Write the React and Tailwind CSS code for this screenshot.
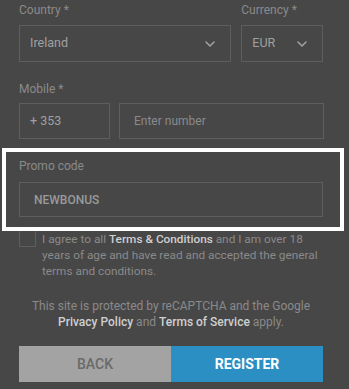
import React from "react";

function Chevron() {
  return (
    <svg width="12" height="8" viewBox="0 0 12 8" fill="none" stroke="#a0a0a0" strokeWidth="1.6" strokeLinecap="round" strokeLinejoin="round">
      <path d="M2 2l4 4 4-4" />
    </svg>
  );
}

export default function App() {
  return (
    <div
      className="relative w-[349px] h-[389px] overflow-hidden bg-[#474747] pl-[19px] pr-[26px] pt-[2px]"
      style={{ fontFamily: "Roboto, 'Liberation Sans', sans-serif" }}
    >
      {/* Country / Currency */}
      <div className="flex gap-[10px]">
        <div className="w-[213px]">
          <div className="text-[12px] leading-[16px] text-[#8a8a8a]">Country *</div>
          <div className="mt-[7px] h-[37px] border border-[#5e5e5e] flex items-center justify-between pl-[10px] pr-[14px]">
            <span className="text-[12.5px] text-[#a0a0a0]">Ireland</span>
            <Chevron />
          </div>
        </div>
        <div className="w-[82px]">
          <div className="text-[12px] leading-[16px] text-[#8a8a8a]">Currency *</div>
          <div className="mt-[7px] h-[37px] border border-[#5e5e5e] flex items-center justify-between pl-[10px] pr-[14px]">
            <span className="text-[12.5px] text-[#a0a0a0]">EUR</span>
            <Chevron />
          </div>
        </div>
      </div>

      {/* Mobile */}
      <div className="mt-[19px] text-[12px] leading-[16px] text-[#8a8a8a]">Mobile *</div>
      <div className="mt-[6px] flex gap-[9px]">
        <div className="w-[91px] h-[36px] border border-[#5e5e5e] flex items-center pl-[10px]">
          <span className="text-[12.5px] text-[#a0a0a0]">+ 353</span>
        </div>
        <div className="flex-1 mr-[-1px] h-[36px] border border-[#5e5e5e] flex items-center pl-[14px]">
          <span className="text-[12px] text-[#8a8a8a]">Enter number</span>
        </div>
      </div>

      {/* Promo */}
      <div className="mt-[19px] text-[12px] leading-[16px] text-[#8a8a8a]">Promo code</div>
      <div className="mt-[8px] h-[35px] border border-[#5e5e5e] flex items-center pl-[14px]">
        <span className="text-[12px] font-medium text-[#9a9a9a]">NEWBONUS</span>
      </div>

      {/* Agreement */}
      <div className="mt-[12px] flex gap-[6px] mr-[-6px]">
        <div className="mt-[1px] w-[17px] h-[17px] shrink-0 border border-[#5e5e5e]" />
        <p className="text-[11.8px] leading-[16px] text-[#8a8a8a] pt-[2px]">
          I agree to all <span className="font-medium text-[#cfcfcf]">Terms &amp; Conditions</span> and I am over 18
          <br />
          years of age and have read and accepted the general
          <br />
          terms and conditions.
        </p>
      </div>

      {/* reCAPTCHA */}
      <p className="mt-[19px] text-center text-[12px] leading-[16px] text-[#8a8a8a]">
        This site is protected by reCAPTCHA and the Google
        <br />
        <span className="font-medium text-[#cfcfcf]">Privacy Policy</span> and{" "}
        <span className="font-medium text-[#cfcfcf]">Terms of Service</span> apply.
      </p>

      {/* Buttons */}
      <div className="mt-[16px] flex h-[36px]">
        <button className="w-[152px] bg-[#a3a3a3] text-[#6a6a6a] text-[14px] font-medium">BACK</button>
        <button className="flex-1 bg-[#2b8fc3] text-white text-[14px] font-bold">REGISTER</button>
      </div>

      {/* Highlight annotation */}
      <div className="absolute left-[2px] top-[148px] w-[342px] h-[83px] border-[4px] border-white pointer-events-none" />
    </div>
  );
}
